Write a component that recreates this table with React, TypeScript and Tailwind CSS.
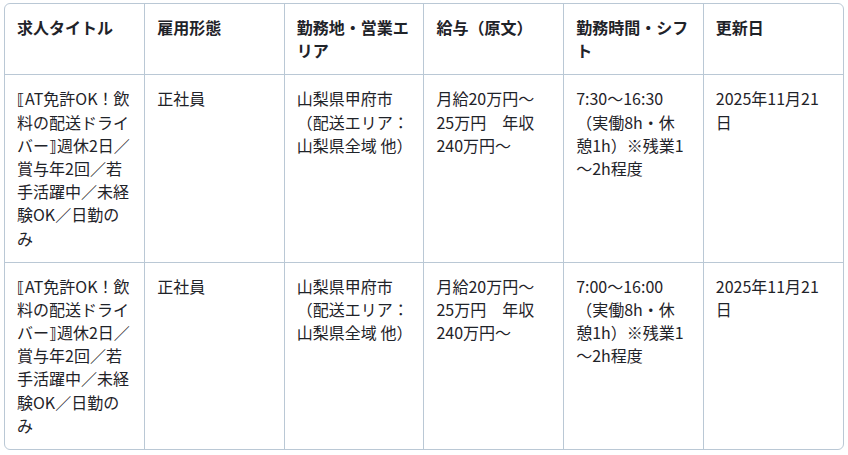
type Job = {
  title: string;
  type: string;
  area: string;
  salary: string;
  shift: string;
  updated: string;
};

const HEADERS = [
  "求人タイトル",
  "雇用形態",
  "勤務地・営業エリア",
  "給与（原文）",
  "勤務時間・シフト",
  "更新日",
];

// \u200B lets the line wrap before 〜 the way the source layout does
const JOBS: Job[] = [
  {
    title: "⟦AT免許OK！飲料の配送ドライバー⟧週休2日／賞与年2回／若手活躍中／未経験OK／日勤のみ",
    type: "正社員",
    area: "山梨県甲府市（配送エリア：山梨県全域 他）",
    salary: "月給20万円～25万円　年収240万円～",
    shift: "7:30〜16:30（実働8h・休憩1h）※残業1\u200B〜2h程度",
    updated: "2025年11月21日",
  },
  {
    title: "⟦AT免許OK！飲料の配送ドライバー⟧週休2日／賞与年2回／若手活躍中／未経験OK／日勤のみ",
    type: "正社員",
    area: "山梨県甲府市（配送エリア：山梨県全域 他）",
    salary: "月給20万円～25万円　年収240万円～",
    shift: "7:00〜16:00（実働8h・休憩1h）※残業1\u200B〜2h程度",
    updated: "2025年11月21日",
  },
];

export default function App() {
  return (
    <div
      className="bg-white px-1 pt-[3px] text-[#1f2329]"
      style={{ fontFamily: '"Noto Sans CJK JP", "DejaVu Sans", sans-serif' }}
    >
      <div className="overflow-hidden rounded-md border border-[#bac8d5]">
        <table className="w-full table-fixed border-collapse text-[16px] leading-[1.45]">
          <thead>
            <tr>
              {HEADERS.map((h, i) => (
                <th
                  key={h}
                  className={`border-b border-[#bac8d5] py-3 pl-3 pr-[13px] text-left align-top font-bold ${
                    i < HEADERS.length - 1 ? "border-r" : ""
                  }`}
                >
                  {h}
                </th>
              ))}
            </tr>
          </thead>
          <tbody>
            {JOBS.map((j, r) => {
              const cells = [j.title, j.type, j.area, j.salary, j.shift, j.updated];
              return (
                <tr key={r}>
                  {cells.map((c, i) => (
                    <td
                      key={i}
                      className={`border-[#bac8d5] py-3 pl-3 pr-[13px] align-top ${
                        i < cells.length - 1 ? "border-r" : ""
                      } ${r < JOBS.length - 1 ? "border-b" : ""}`}
                    >
                      {c}
                    </td>
                  ))}
                </tr>
              );
            })}
          </tbody>
        </table>
      </div>
    </div>
  );
}
